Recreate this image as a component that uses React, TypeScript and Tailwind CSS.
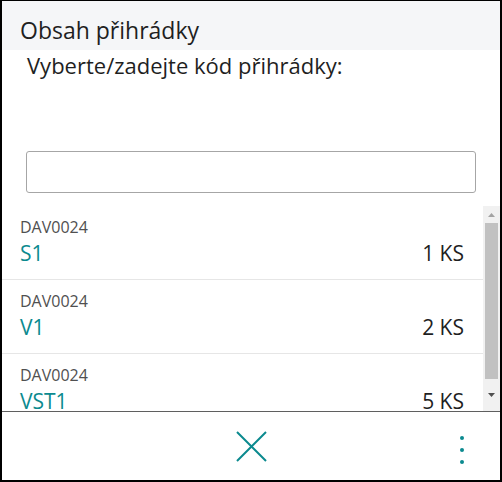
import React from "react";

const rows = [
  { code: "DAV0024", bin: "S1", qty: "1 KS" },
  { code: "DAV0024", bin: "V1", qty: "2 KS" },
  { code: "DAV0024", bin: "VST1", qty: "5 KS" },
];

export default function App() {
  return (
    <div className="w-[502px] h-[482px] border-black border-x-2 border-b-2 border-t flex flex-col bg-white font-['Segoe_UI','Open_Sans',sans-serif] text-[#1f1f1f] overflow-hidden">
      <div className="h-[49px] shrink-0 bg-[#f5f6f8] flex items-end pl-[18px] pb-[5px]">
        <span className="text-[23px] leading-[30px]">Obsah přihrádky</span>
      </div>
      <div className="pl-[25px] pt-[1px] text-[22px] leading-[28px]">Vyberte/zadejte kód přihrádky:</div>
      <div className="pl-[24px] pr-[24px] pt-[72px]">
        <div className="h-[42px] border border-[#a6a6a6] rounded-[3px] bg-white"></div>
      </div>
      <div className="mt-[13px] flex h-[205px] shrink-0">
        <div className="flex-1 overflow-hidden">
          {rows.map((r, i) => (
            <div key={i} className="h-[74px] border-b border-[#e6e6e6] pl-[18px] pr-[19px] pt-[10px]">
              <div className="text-[16px] leading-[22px] text-[#505050]">{r.code}</div>
              <div className="flex justify-between items-baseline text-[21px] leading-[30px]">
                <span className="text-[#0b8a8f]">{r.bin}</span>
                <span className="text-[#1f1f1f]">{r.qty}</span>
              </div>
            </div>
          ))}
        </div>
        <div className="w-[17px] bg-[#f1f1f1] flex flex-col items-center">
          <div className="h-[17px] flex items-center justify-center">
            <svg width="7" height="4" viewBox="0 0 7 4"><path d="M0 4 L3.5 0 L7 4 Z" fill="#a3a3a3" /></svg>
          </div>
          <div className="w-[13px] h-[156px] bg-[#c1c1c1]"></div>
          <div className="flex-1 flex items-center justify-center">
            <svg width="7" height="4" viewBox="0 0 7 4"><path d="M0 0 L3.5 4 L7 0 Z" fill="#505050" /></svg>
          </div>
        </div>
      </div>
      <div className="flex-1 border-t border-[#5f5f5f] flex items-center relative">
        <div className="flex-1 flex justify-center">
          <svg width="31" height="31" viewBox="0 0 31 31">
            <path d="M1 1 L30 30 M30 1 L1 30" stroke="#0b8a8f" strokeWidth="2" fill="none" />
          </svg>
        </div>
        <div className="absolute right-[36px] top-[24px] flex flex-col gap-[8px]">
          <div className="w-[4px] h-[4px] rounded-full bg-[#0b8a8f]"></div>
          <div className="w-[4px] h-[4px] rounded-full bg-[#0b8a8f]"></div>
          <div className="w-[4px] h-[4px] rounded-full bg-[#0b8a8f]"></div>
        </div>
      </div>
    </div>
  );
}
